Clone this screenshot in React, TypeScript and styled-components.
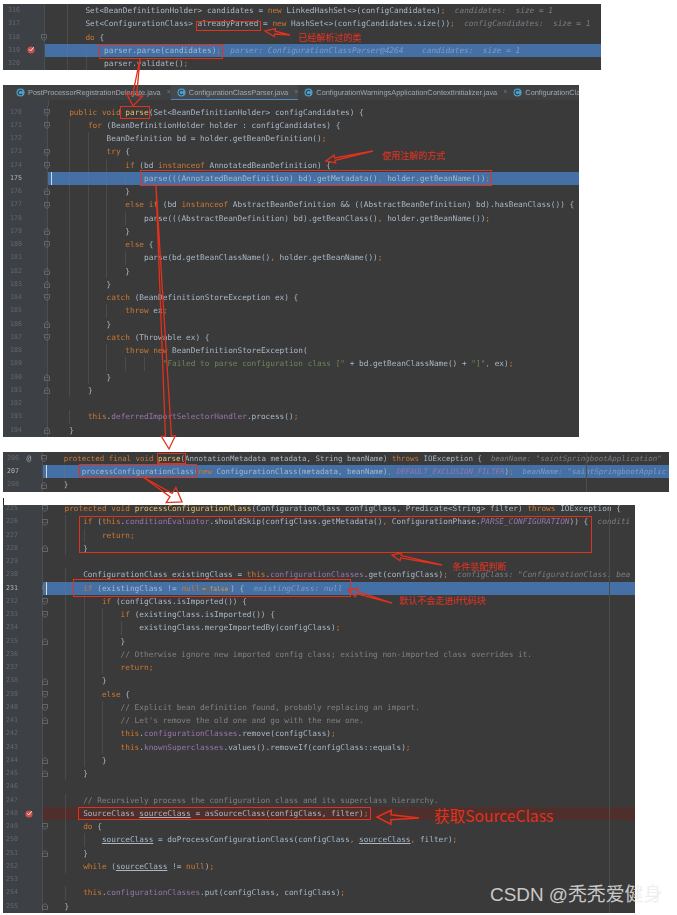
import React from 'react';
import styled, { createGlobalStyle } from 'styled-components';

const GlobalStyle = createGlobalStyle`
  html, body {
    margin: 0;
    padding: 0;
    background: #fff;
  }
`;

const Page = styled.div`
  position: relative;
  width: 677px;
  height: 915px;
  overflow: hidden;
  padding: 4px 0 0 3px;
  box-sizing: border-box;
`;

const Panel = styled.section<{ $width: number; $gap?: number; $char?: number; $margin?: number; $crop?: number }>`
  position: relative;
  width: ${(p) => p.$width}px;
  margin-top: ${(p) => p.$gap || 0}px;
  background: #3a3a3a;
  overflow: hidden;
  font-family: 'DejaVu Sans Mono', 'Liberation Mono', monospace;
  font-size: ${(p) => p.$char || 7.77}px;
  text-rendering: geometricPrecision;
  filter: blur(0.4px);

  & > :first-child {
    margin-top: ${(p) => -(p.$crop || 0)}px;
  }

  ${(p) =>
    p.$margin
      ? `&::after {
    content: '';
    position: absolute;
    top: 0;
    bottom: 0;
    left: ${p.$margin}px;
    width: 1px;
    background: #4c4c4c;
  }`
      : ''}
`;

const TabBar = styled.div`
  display: flex;
  height: 15px;
  background: #3e4042;
  font-family: 'Liberation Sans', Arial, sans-serif;
  font-size: 7.4px;
  color: #a3a7ab;
  white-space: nowrap;
`;

const Tab = styled.div<{ $active?: boolean; $width: number }>`
  display: flex;
  align-items: center;
  gap: 3px;
  flex: 0 0 ${(p) => p.$width}px;
  padding-left: 6px;
  box-sizing: border-box;
  background: ${(p) => (p.$active ? '#45494c' : 'transparent')};
  border-bottom: 1px solid ${(p) => (p.$active ? '#4a88c7' : 'transparent')};

  &:first-child {
    padding-left: 13px;
  }
`;

const TabClose = styled.span`
  margin-left: 3px;
  color: #74787c;
  font-size: 7px;
`;

const Stub = styled.div`
  height: 5.4px;
  display: flex;
`;

const StubGutter = styled.div<{ $w: number }>`
  width: ${(p) => p.$w}px;
  background: #3d4045;
  border-right: 1px solid #4b4d50;
`;

const Row = styled.div<{ $tone?: 'blue' | 'red' }>`
  display: flex;
  height: 13.25px;
  line-height: 13.25px;
  background: ${(p) => (p.$tone === 'blue' ? '#4470a6' : p.$tone === 'red' ? '#4f2f2c' : 'transparent')};
`;

const Gutter = styled.div<{ $geo: Geo }>`
  display: grid;
  grid-template-columns: ${(p) => p.$geo.marker - p.$geo.num}px ${(p) => p.$geo.fold - p.$geo.marker}px 6px;
  align-items: center;
  flex: 0 0 ${(p) => p.$geo.gutter}px;
  min-width: 0;
  padding-left: ${(p) => p.$geo.num}px;
  background: #3d4045;
  border-right: 1px solid #4b4d50;
  box-sizing: border-box;
`;

const LineNo = styled.span<{ $current?: boolean }>`
  grid-column: 1;
  font-size: 6.6px;
  color: ${(p) => (p.$current ? '#b4b5b6' : '#64676b')};
`;

const Marker = styled.span`
  grid-column: 2;
  display: flex;
  align-items: center;
  justify-content: center;
  width: 8px;
  height: 8px;
  color: #a9b0b6;
  font-size: 8px;
  line-height: 8px;
`;

const FoldMark = styled.svg`
  grid-column: 3;
  width: 6px;
  height: 7px;
`;

const Code = styled.div<{ $indent: number; $base: number }>`
  position: relative;
  flex: 1;
  min-width: 0;
  white-space: pre;
  color: #a9b7c6;
  padding-left: calc(${(p) => p.$base}px + ${(p) => p.$indent}ch);
  background-image: repeating-linear-gradient(90deg, rgba(120, 120, 120, 0.28) 0, rgba(120, 120, 120, 0.28) 1px, transparent 1px, transparent 4ch);
  background-repeat: no-repeat;
  background-position: calc(${(p) => p.$base}px + 4ch) 0;
  background-size: ${(p) => Math.max(p.$indent - 4, 0)}ch 100%;
`;

const Caret = styled.i<{ $base: number }>`
  position: absolute;
  left: ${(p) => p.$base}px;
  top: 0;
  width: 1px;
  height: 100%;
  background: #cfd8e3;
`;

const Token = styled.span<{ $kind: string }>`
  ${(p) =>
    ({
      k: 'color:#cc7832;',
      m: 'color:#e8bf6a;',
      f: 'color:#9876aa;',
      i: 'color:#9876aa;font-style:italic;',
      s: 'color:#6a8759;',
      c: 'color:#808080;',
      h: 'color:rgba(205,215,230,.42);font-style:italic;',
      u: 'text-decoration:underline;',
      n: 'background:#5c6c80;color:#9aa5b0;font-size:.8em;border-radius:2px;padding:0 2px;',
    })[p.$kind] || ''}
`;

const RedBox = styled.div<{ $x: number; $y: number; $w: number; $h: number }>`
  position: absolute;
  left: ${(p) => p.$x}px;
  top: ${(p) => p.$y}px;
  width: ${(p) => p.$w}px;
  height: ${(p) => p.$h}px;
  box-sizing: border-box;
  border: 1.5px solid #e2311d;
`;

const Note = styled.span<{ $x: number; $y: number; $size?: number }>`
  position: absolute;
  left: ${(p) => p.$x}px;
  top: ${(p) => p.$y}px;
  font-family: 'Noto Sans CJK SC', 'Liberation Sans', sans-serif;
  font-size: ${(p) => p.$size || 9}px;
  line-height: 1;
  white-space: nowrap;
  color: #e2311d;
`;

const Watermark = styled.span`
  position: absolute;
  left: 490px;
  top: 884px;
  font-family: 'Liberation Sans', 'Noto Sans CJK SC', sans-serif;
  font-size: 18.9px;
  line-height: 22px;
  white-space: nowrap;
  color: rgba(235, 235, 235, 0.82);
`;

const Tick = styled.div`
  width: 1px;
  height: 7px;
  margin-top: 6.5px;
  background: #222;
`;

const ArrowLayer = styled.svg`
  position: absolute;
  left: 0;
  top: 0;
  width: 677px;
  height: 915px;
  pointer-events: none;
`;

type Fold = 'o' | 'c' | undefined;
type Line = [number, number, string, Fold?, ('blue' | 'red')?, string?];
type Geo = { gutter: number; num: number; marker: number; fold: number; base: number };

function tokens(src: string) {
  const out: React.ReactNode[] = [];
  const re = /\{([a-z])\|([^}]*)\}/g;
  let last = 0;
  let m: RegExpExecArray | null;
  while ((m = re.exec(src))) {
    if (m.index > last) out.push(src.slice(last, m.index));
    out.push(
      <Token key={m.index} $kind={m[1]}>
        {m[2]}
      </Token>,
    );
    last = m.index + m[0].length;
  }
  out.push(src.slice(last));
  return out;
}

function FoldIcon({ kind }: { kind: 'o' | 'c' }) {
  const d = kind === 'o' ? 'M.5 .5h5v4l-2.5 2-2.5-2z' : 'M.5 6.5h5v-4l-2.5-2-2.5 2z';
  return (
    <FoldMark viewBox="0 0 6 7">
      <path d={d} fill="none" stroke="#6d7074" strokeWidth="0.8" />
      <path d="M1.5 3.5h3" stroke="#6d7074" strokeWidth="0.6" />
    </FoldMark>
  );
}

function Breakpoint() {
  return (
    <svg viewBox="0 0 8 8" width="8" height="8">
      <circle cx="4" cy="4" r="3.6" fill="#c9524c" />
      <path d="M2.2 3.4l1.5 1.5 3-3.6" fill="none" stroke="#eee" strokeWidth="1" />
    </svg>
  );
}

function CodeRow({ line, geo }: { line: Line; geo: Geo }) {
  const [no, indent, src, fold, tone, extra] = line;
  return (
    <Row $tone={tone}>
      <Gutter $geo={geo}>
        <LineNo $current={tone === 'blue' && extra === 'caret'}>{no}</LineNo>
        {extra === 'bp' && (
          <Marker>
            <Breakpoint />
          </Marker>
        )}
        {extra === 'at' && <Marker>@</Marker>}
        {fold && <FoldIcon kind={fold} />}
      </Gutter>
      <Code $indent={indent} $base={geo.base - geo.gutter}>
        {extra === 'caret' && <Caret $base={geo.base - geo.gutter} />}
        {tokens(src)}
      </Code>
    </Row>
  );
}

const firstLines: Line[] = [
  [316, 8, 'Set<BeanDefinitionHolder> candidates = {k|new} LinkedHashSet<>(configCandidates){k|;}  {h|candidates:  size = 1}'],
  [317, 8, 'Set<ConfigurationClass> alreadyParsed = {k|new} HashSet<>(configCandidates.size()){k|;}  {h|configCandidates:  size = 1}'],
  [318, 8, '{k|do} {', 'o'],
  [319, 12, 'parser.parse(candidates){k|;}  {h|parser: ConfigurationClassParser@4264    candidates:  size = 1}', undefined, 'blue', 'bp'],
  [320, 12, 'parser.validate(){k|;}'],
];

const secondLines: Line[] = [
  [170, 4, '{k|public void} {m|parse}(Set<BeanDefinitionHolder> configCandidates) {', 'o'],
  [171, 8, '{k|for} (BeanDefinitionHolder holder : configCandidates) {', 'o'],
  [172, 12, 'BeanDefinition bd = holder.getBeanDefinition(){k|;}'],
  [173, 12, '{k|try} {', 'o'],
  [174, 16, '{k|if} (bd {k|instanceof} AnnotatedBeanDefinition) {', 'o'],
  [175, 20, 'parse(((AnnotatedBeanDefinition) bd).getMetadata(){k|,} holder.getBeanName()){k|;}', undefined, 'blue', 'caret'],
  [176, 16, '}', 'c'],
  [177, 16, '{k|else if} (bd {k|instanceof} AbstractBeanDefinition && ((AbstractBeanDefinition) bd).hasBeanClass()) {', 'o'],
  [178, 20, 'parse(((AbstractBeanDefinition) bd).getBeanClass(){k|,} holder.getBeanName()){k|;}'],
  [179, 16, '}', 'c'],
  [180, 16, '{k|else} {', 'o'],
  [181, 20, 'parse(bd.getBeanClassName(){k|,} holder.getBeanName()){k|;}'],
  [182, 16, '}', 'c'],
  [183, 12, '}', 'c'],
  [184, 12, '{k|catch} (BeanDefinitionStoreException ex) {', 'o'],
  [185, 16, '{k|throw} ex{k|;}'],
  [186, 12, '}', 'c'],
  [187, 12, '{k|catch} (Throwable ex) {', 'o'],
  [188, 16, '{k|throw new} BeanDefinitionStoreException('],
  [189, 24, '{s|"Failed to parse configuration class ["} + bd.getBeanClassName() + {s|"]"}{k|,} ex){k|;}'],
  [190, 12, '}', 'c'],
  [191, 8, '}', 'c'],
  [192, 0, ''],
  [193, 8, '{k|this}.{f|deferredImportSelectorHandler}.process(){k|;}'],
  [194, 4, '}', 'c'],
];

const thirdLines: Line[] = [
  [206, 4, '{k|protected final void} {m|parse}(AnnotationMetadata metadata, String beanName) {k|throws} IOException {  {h|beanName: "saintSpringbootApplication"}', 'o', undefined, 'at'],
  [207, 8, 'processConfigurationClass({k|new} ConfigurationClass(metadata, beanName){k|,} {i|DEFAULT_EXCLUSION_FILTER}){k|;}  {h|beanName: "saintSpringbootApplic}', undefined, 'blue', 'caret'],
  [208, 4, '}', 'c'],
];

const fourthLines: Line[] = [
  [225, 4, '{k|protected void} {m|processConfigurationClass}(ConfigurationClass configClass, Predicate<String> filter) {k|throws} IOException {', 'o'],
  [226, 8, '{k|if} ({k|this}.{f|conditionEvaluator}.shouldSkip(configClass.getMetadata(){k|,} ConfigurationPhase.{i|PARSE_CONFIGURATION})) {  {h|conditi}', 'o'],
  [227, 12, '{k|return;}'],
  [228, 8, '}', 'c'],
  [229, 0, ''],
  [230, 8, 'ConfigurationClass existingClass = {k|this}.{f|configurationClasses}.get(configClass){k|;}  {h|configClass: "ConfigurationClass: bea}'],
  [231, 8, '{k|if} (existingClass != {k|null}{n|= false}) {  {h|existingClass: null}', 'o', 'blue', 'caret'],
  [232, 12, '{k|if} (configClass.isImported()) {', 'o'],
  [233, 16, '{k|if} (existingClass.isImported()) {', 'o'],
  [234, 20, 'existingClass.mergeImportedBy(configClass){k|;}'],
  [235, 16, '}', 'c'],
  [236, 16, '{c|// Otherwise ignore new imported config class; existing non-imported class overrides it.}'],
  [237, 16, '{k|return;}'],
  [238, 12, '}', 'c'],
  [239, 12, '{k|else} {', 'o'],
  [240, 16, "{c|// Explicit bean definition found, probably replacing an import.}", 'o'],
  [241, 16, "{c|// Let's remove the old one and go with the new one.}", 'c'],
  [242, 16, '{k|this}.{f|configurationClasses}.remove(configClass){k|;}'],
  [243, 16, '{k|this}.{f|knownSuperclasses}.values().removeIf(configClass::equals){k|;}'],
  [244, 12, '}', 'c'],
  [245, 8, '}', 'c'],
  [246, 0, ''],
  [247, 8, '{c|// Recursively process the configuration class and its superclass hierarchy.}'],
  [248, 8, 'SourceClass {u|sourceClass} = asSourceClass(configClass, filter){k|;}', undefined, 'red', 'bp'],
  [249, 8, '{k|do} {', 'o'],
  [250, 12, '{u|sourceClass} = doProcessConfigurationClass(configClass{k|,} {u|sourceClass}{k|,} filter){k|;}'],
  [251, 8, '}', 'c'],
  [252, 8, '{k|while} ({u|sourceClass} != {k|null}){k|;}'],
  [253, 0, ''],
  [254, 8, '{k|this}.{f|configurationClasses}.put(configClass, configClass){k|;}'],
  [255, 4, '}', 'c'],
];

const geoFirst: Geo = { gutter: 42, num: 5, marker: 24, fold: 38, base: 45 };
const geoSecond: Geo = { gutter: 45, num: 7, marker: 26, fold: 41, base: 47.5 };
const geoThird: Geo = { gutter: 40, num: 4, marker: 22, fold: 38, base: 42.7 };
const geoFourth: Geo = { gutter: 40, num: 3, marker: 22, fold: 39, base: 42.8 };

const tabs = [
  { name: 'PostProcessorRegistrationDelegate.java', width: 164 },
  { name: 'ConfigurationClassParser.java', width: 124, active: true },
  { name: 'ConfigurationWarningsApplicationContextInitializer.java', width: 206 },
  { name: 'ConfigurationClassPo', width: 82, open: true },
];

function TabIcon() {
  return (
    <svg viewBox="0 0 8 8" width="9" height="9">
      <circle cx="4" cy="4" r="3.6" fill="#4f9dc8" />
      <path d="M5.4 2.7a2 2 0 1 0 0 2.6" fill="none" stroke="#2e3d49" strokeWidth="1" />
    </svg>
  );
}

type Arrow = { from: [number, number]; to: [number, number]; head: number; half: number; shaft: number; sw?: number };

const arrows: Arrow[] = [
  { from: [290, 35], to: [265, 31], head: 10, half: 4, shaft: 1.4 },
  { from: [140, 59], to: [133, 106], head: 11, half: 8, shaft: 2 },
  { from: [373, 151], to: [326, 161], head: 9, half: 4, shaft: 1.2 },
  { from: [156, 186], to: [169, 449], head: 13, half: 7, shaft: 3 },
  { from: [143, 477], to: [182, 502], head: 13, half: 9, shaft: 2 },
  { from: [442, 565], to: [392, 555], head: 9, half: 4, shaft: 1.2 },
  { from: [392, 603], to: [348, 590], head: 9, half: 4.5, shaft: 1.2 },
  { from: [419, 818], to: [377, 817], head: 14, half: 7, shaft: 2.4, sw: 1.6 },
];

function arrowPoints({ from, to, head, half, shaft }: Arrow) {
  const dx = to[0] - from[0];
  const dy = to[1] - from[1];
  const len = Math.hypot(dx, dy);
  const ux = dx / len;
  const uy = dy / len;
  const nx = -uy;
  const ny = ux;
  const bx = to[0] - ux * head;
  const by = to[1] - uy * head;
  const pts = [
    from,
    [bx + nx * shaft, by + ny * shaft],
    [bx + nx * half, by + ny * half],
    to,
    [bx - nx * half, by - ny * half],
    [bx - nx * shaft, by - ny * shaft],
  ];
  return pts.map((p) => p.map((v) => v.toFixed(1)).join(',')).join(' ');
}

const boxes = [
  [196, 21, 65, 10],
  [99, 44, 124, 15],
  [120, 106, 30, 13],
  [140, 170, 352, 16],
  [157, 453, 29, 11],
  [79, 464, 118, 13],
  [79, 516, 513, 37],
  [73, 579, 278, 18],
  [78, 807, 293, 13],
];

export default function App() {
  return (
    <Page>
      <GlobalStyle />
      <Panel $width={598}>
        {firstLines.map((l) => (
          <CodeRow key={l[0]} line={l} geo={geoFirst} />
        ))}
      </Panel>
      <Panel $width={576} $gap={15}>
        <TabBar>
          {tabs.map((t) => (
            <Tab key={t.name} $active={t.active} $width={t.width}>
              <TabIcon />
              {t.name}
              {!t.open && <TabClose>×</TabClose>}
            </Tab>
          ))}
        </TabBar>
        <Stub>
          <StubGutter $w={45} />
        </Stub>
        {secondLines.map((l) => (
          <CodeRow key={l[0]} line={l} geo={geoSecond} />
        ))}
      </Panel>
      <Panel $width={666} $gap={15} $char={7.47} $margin={583}>
        {thirdLines.map((l) => (
          <CodeRow key={l[0]} line={l} geo={geoThird} />
        ))}
      </Panel>
      <Tick />
      <Panel $width={632} $margin={606} $crop={3}>
        {fourthLines.map((l) => (
          <CodeRow key={l[0]} line={l} geo={geoFourth} />
        ))}
      </Panel>

      {boxes.map(([x, y, w, h]) => (
        <RedBox key={`${x}-${y}`} $x={x} $y={y} $w={w} $h={h} />
      ))}
      <ArrowLayer viewBox="0 0 677 915">
        {arrows.map((a) => (
          <polygon key={a.from.join()} points={arrowPoints(a)} fill="none" stroke="#e2311d" strokeWidth={a.sw || 1.3} />
        ))}
      </ArrowLayer>
      <Note $x={298} $y={33}>已经解析过的类</Note>
      <Note $x={382} $y={151}>使用注解的方式</Note>
      <Note $x={452} $y={562}>条件装配判断</Note>
      <Note $x={399} $y={596}>默认不会走进if代码块</Note>
      <Note $x={434} $y={808} $size={15.6}>获取SourceClass</Note>
      <Watermark>CSDN @秃秃爱健身</Watermark>
    </Page>
  );
}
